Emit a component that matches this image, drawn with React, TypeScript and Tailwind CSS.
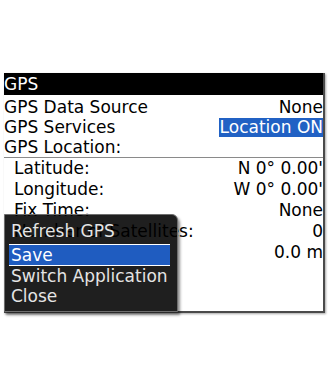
import React from 'react'

const font = { fontFamily: '"DejaVu Sans", "Liberation Sans", sans-serif' }

function Row({ label, value, sub, hl }: { label: string; value?: string; sub?: boolean; hl?: boolean }) {
  return (
    <div className={`flex items-center justify-between ${sub ? 'h-[21px] leading-[21px] pl-[10px]' : 'h-[20px] leading-[20px] pl-[0px]'}`}>
      <span>{label}</span>
      {value && (
        <span className={hl ? 'bg-[#2161c4] text-white h-[19px] leading-[19px] pl-[1px]' : ''}>{value}</span>
      )}
    </div>
  )
}

export default function App() {
  return (
    <div className="relative w-[330px] h-[385px] bg-white text-[17px] text-black overflow-hidden" style={font}>
      <div className="ml-[4px] mt-[73px] w-[321px] h-[240px] border-r-2 border-b-2 border-[#4a4a4a] shadow-[1px_1px_2px_rgba(0,0,0,0.35)] whitespace-nowrap">
        <div className="h-[22px] leading-[22px] bg-black text-white pl-[0px]">GPS</div>
        <div className="mt-[2px]">
          <Row label="GPS Data Source" value="None" />
          <Row label="GPS Services" value="Location ON" hl />
          <Row label="GPS Location:" />
        </div>
        <div className="h-px bg-[#8a8a8a]" />
        <div>
          <Row sub label="Latitude:" value="N 0° 0.00'" />
          <Row sub label="Longitude:" value="W 0° 0.00'" />
          <Row sub label="Fix Time:" value="None" />
          <Row sub label="Number of Satellites:" value="0" />
          <div className="h-[21px] leading-[21px] text-right">0.0 m</div>
        </div>
      </div>

      <div className="absolute left-[4px] top-[214px] w-[174px] h-[98px] bg-black/[0.88] border border-[#6e6e6e] rounded-tr-[6px] shadow-[2px_3px_3px_rgba(0,0,0,0.45)] text-[#e4e4e4] pt-[6px] whitespace-nowrap">
        <div className="h-[21px] leading-[21px] pl-[6px]">Refresh GPS</div>
        <div className="mt-[2px] mx-[4px] mr-[7px] h-[22px] leading-[20px] bg-[#1f5cc0] border-y border-white pl-[2px] text-white">Save</div>
        <div className="h-[20px] leading-[20px] pl-[6px]">Switch Application</div>
        <div className="h-[21px] leading-[21px] pl-[6px]">Close</div>
      </div>
    </div>
  )
}
